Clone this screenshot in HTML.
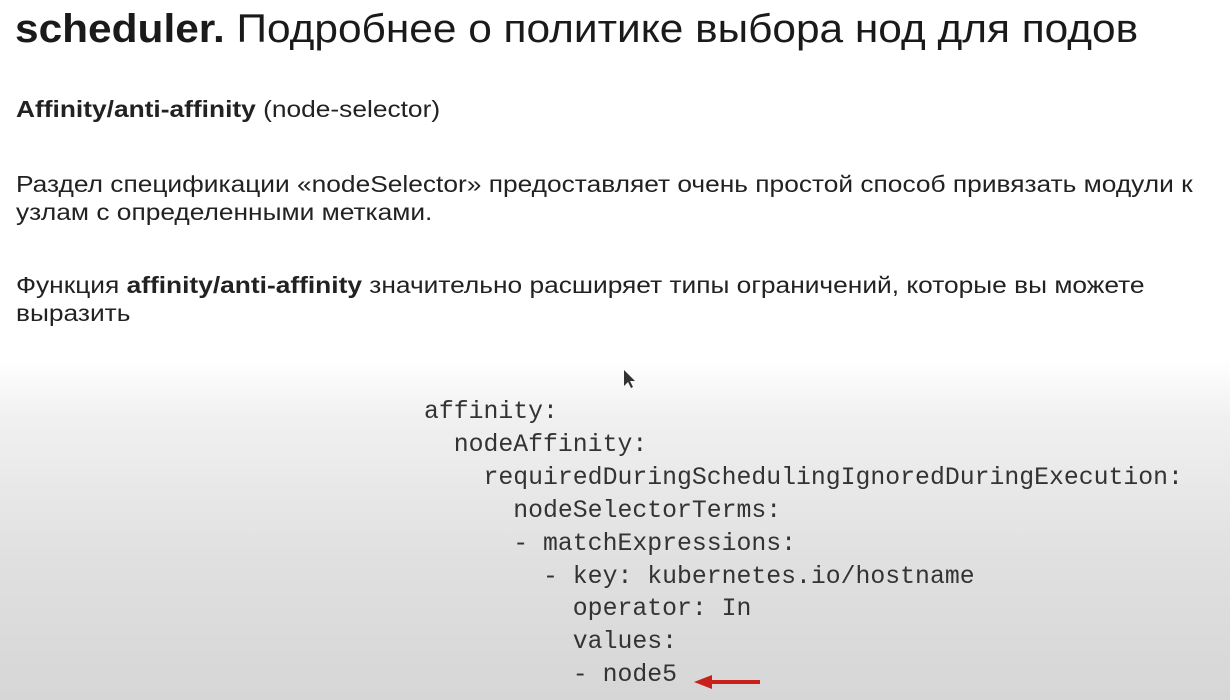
<!DOCTYPE html>
<html><head><meta charset="utf-8"><style>
body{margin:0;width:1230px;height:700px;overflow:hidden;font-family:"Liberation Sans",sans-serif;color:#222;
background:linear-gradient(#fff 0,#fff 360px,#f0f0f0 420px,#e0e0e0 560px,#d6d6d6 700px);position:relative}
.t{position:absolute;left:16px;white-space:nowrap;transform:scaleX(1.12);transform-origin:0 0}
h1{position:absolute;left:15px;top:6px;margin:0;font-size:40px;line-height:46px;font-weight:normal;white-space:nowrap;color:#1a1a1a;transform:scaleX(1.06);transform-origin:0 0}
.p{font-size:23.5px;line-height:28px}
.code{position:absolute;left:424px;top:396px;font-family:"Liberation Mono",monospace;font-size:24.8px;line-height:32.9px;white-space:pre;color:#333}
</style></head><body>
<h1><b>scheduler.</b> Подробнее о политике выбора нод для подов</h1>
<div class="t p" style="top:95px"><b>Affinity/anti-affinity</b> (node-selector)</div>
<div class="t p" style="top:170px">Раздел спецификации «nodeSelector» предоставляет очень простой способ привязать модули к<br>узлам с определенными метками.</div>
<div class="t p" style="top:271px">Функция <b>affinity/anti-affinity</b> значительно расширяет типы ограничений, которые вы можете<br>выразить</div>
<div class="code">affinity:
  nodeAffinity:
    requiredDuringSchedulingIgnoredDuringExecution:
      nodeSelectorTerms:
      - matchExpressions:
        - key: kubernetes.io/hostname
          operator: In
          values:
          - node5</div>
<svg style="position:absolute;left:690px;top:672px" width="75" height="20"><path d="M70 10H20" stroke="#c8201a" stroke-width="4"/><path d="M4 10L22 3V17Z" fill="#c8201a"/></svg>
<svg style="position:absolute;left:622px;top:368px" width="14" height="22"><path d="M2 2V18L6 14L9 20L11 19L8 13H13Z" fill="#333"/></svg>
</body></html>
